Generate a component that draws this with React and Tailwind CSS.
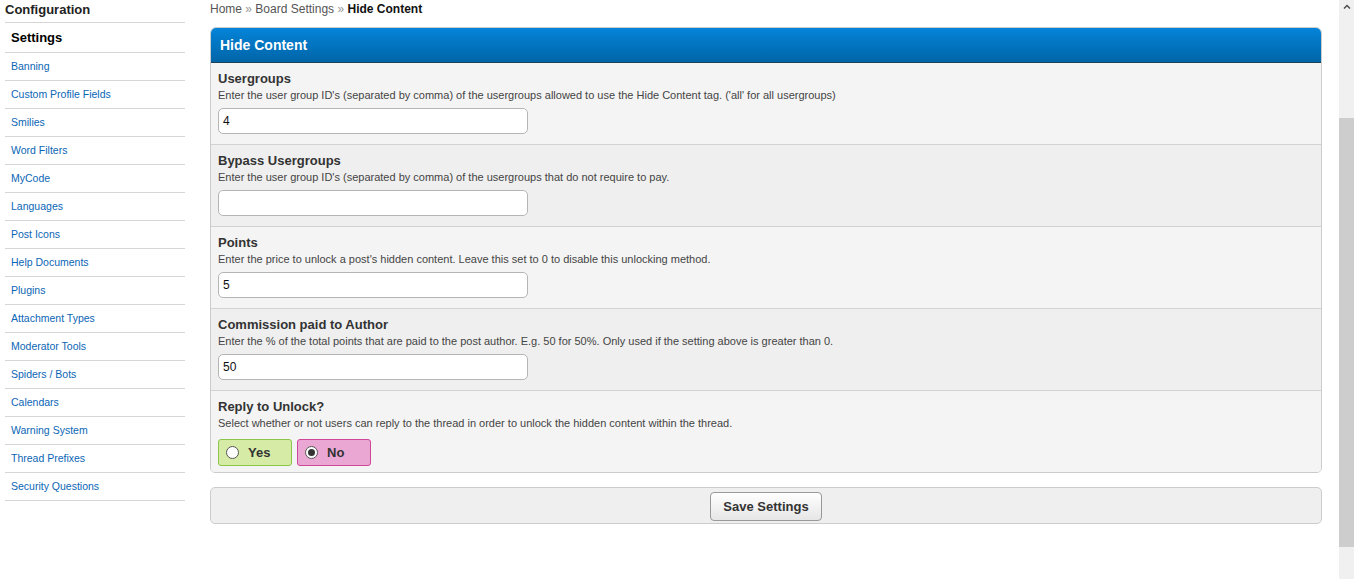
const navItems = [
  "Banning",
  "Custom Profile Fields",
  "Smilies",
  "Word Filters",
  "MyCode",
  "Languages",
  "Post Icons",
  "Help Documents",
  "Plugins",
  "Attachment Types",
  "Moderator Tools",
  "Spiders / Bots",
  "Calendars",
  "Warning System",
  "Thread Prefixes",
  "Security Questions",
];

const settings = [
  {
    title: "Usergroups",
    desc: "Enter the user group ID's (separated by comma) of the usergroups allowed to use the Hide Content tag. ('all' for all usergroups)",
    value: "4",
  },
  {
    title: "Bypass Usergroups",
    desc: "Enter the user group ID's (separated by comma) of the usergroups that do not require to pay.",
    value: "",
  },
  {
    title: "Points",
    desc: "Enter the price to unlock a post's hidden content. Leave this set to 0 to disable this unlocking method.",
    value: "5",
  },
  {
    title: "Commission paid to Author",
    desc: "Enter the % of the total points that are paid to the post author. E.g. 50 for 50%. Only used if the setting above is greater than 0.",
    value: "50",
  },
];

function Sidebar() {
  return (
    <aside className="w-[180px] shrink-0">
      <div className="h-[23px] border-b border-[#d6d6d6] text-[13px] font-bold leading-[19px] text-[#222]">
        Configuration
      </div>
      <div className="flex h-[30px] items-center border-b border-[#d6d6d6] pt-[1px] pl-[6px] text-[13px] font-bold text-black">
        Settings
      </div>
      {navItems.map((item) => (
        <a
          key={item}
          href="#"
          className="flex h-[28px] items-center border-b border-[#d6d6d6] pt-[1px] pl-[6px] text-[10.5px] text-[#0b66b5]"
        >
          {item}
        </a>
      ))}
    </aside>
  );
}

function SettingRow({ title, desc, children, alt }) {
  return (
    <div
      className={`border-b border-[#d2d2d2] px-[7px] pt-[8px] pb-[10px] ${
        alt ? "bg-[#efefef]" : "bg-[#f4f4f4]"
      }`}
    >
      <div className="text-[13px] font-bold leading-[16px] text-[#333]">{title}</div>
      <div className="mt-[1px] text-[11px] leading-[14px] text-[#444]">{desc}</div>
      {children}
    </div>
  );
}

function Radio({ checked }) {
  return (
    <span className="flex h-[13px] w-[13px] items-center justify-center rounded-full border border-[#555] bg-white">
      {checked && <span className="h-[7px] w-[7px] rounded-full bg-[#333]" />}
    </span>
  );
}

export default function App() {
  return (
    <div
      className="flex h-[579px] w-[1360px] overflow-hidden bg-white"
      style={{ fontFamily: '"Liberation Sans", Arial, sans-serif' }}
    >
      <div className="flex flex-1 pl-[5px]">
        <Sidebar />
        <main className="ml-[25px] w-[1112px] shrink-0">
          <div className="h-[17px] text-[12px] leading-[18px] text-[#555]">
            Home <span className="text-[#999]">»</span> Board Settings{" "}
            <span className="text-[#999]">»</span>{" "}
            <span className="font-bold text-[#111]">Hide Content</span>
          </div>

          <div className="mt-[10px] overflow-hidden rounded-t-[6px] rounded-b-[5px] border border-[#cccccc]">
            <div className="flex h-[35px] items-center border-b border-[#1e4255] bg-gradient-to-b from-[#0584d9] to-[#0065a8] pl-[9px] text-[14px] font-bold text-white">
              Hide Content
            </div>
            {settings.map((s, i) => (
              <SettingRow key={s.title} title={s.title} desc={s.desc} alt={i % 2 === 1}>
                <input
                  type="text"
                  defaultValue={s.value}
                  className="mt-[6px] block h-[26px] w-[310px] rounded-[5px] border border-[#b5b5b5] bg-white px-[4px] text-[12px] text-[#111] outline-none"
                />
              </SettingRow>
            ))}
            <div className="bg-[#f4f4f4] px-[7px] pt-[8px] pb-[6px]">
              <div className="text-[13px] font-bold leading-[16px] text-[#333]">Reply to Unlock?</div>
              <div className="mt-[1px] text-[11px] leading-[14px] text-[#444]">
                Select whether or not users can reply to the thread in order to unlock the hidden content within the thread.
              </div>
              <div className="mt-[9px] flex gap-[5px]">
                <label className="flex h-[27px] w-[74px] items-center gap-[9px] rounded-[3px] border border-[#8dc44a] bg-[#d6eba6] pl-[7px] text-[13px] font-bold text-[#333]">
                  <Radio />
                  Yes
                </label>
                <label className="flex h-[27px] w-[74px] items-center gap-[9px] rounded-[3px] border border-[#d0479a] bg-[#eba7d4] pl-[7px] text-[13px] font-bold text-[#333]">
                  <Radio checked />
                  No
                </label>
              </div>
            </div>
          </div>

          <div className="mt-[14px] flex h-[37px] items-center justify-center rounded-[5px] border border-[#cccccc] bg-[#efefef] pt-[1px]">
            <button className="h-[29px] w-[112px] rounded-[4px] border border-[#999] bg-gradient-to-b from-white to-[#e6e6e6] pt-[1px] text-[13px] font-bold text-[#333]">
              Save Settings
            </button>
          </div>
        </main>
      </div>

      <div className="flex w-[15px] shrink-0 flex-col bg-[#f0f0f0]">
        <div className="flex h-[12px] items-center justify-center">
          <svg width="8" height="5" viewBox="0 0 8 5">
            <path d="M1 4.5 L4 1.5 L7 4.5" fill="none" stroke="#505050" strokeWidth="1.5" />
          </svg>
        </div>
        <div className="mt-[106px] h-[429px] bg-[#cdcdcd]" />
      </div>
      <div className="w-[6px] shrink-0" />
    </div>
  );
}
